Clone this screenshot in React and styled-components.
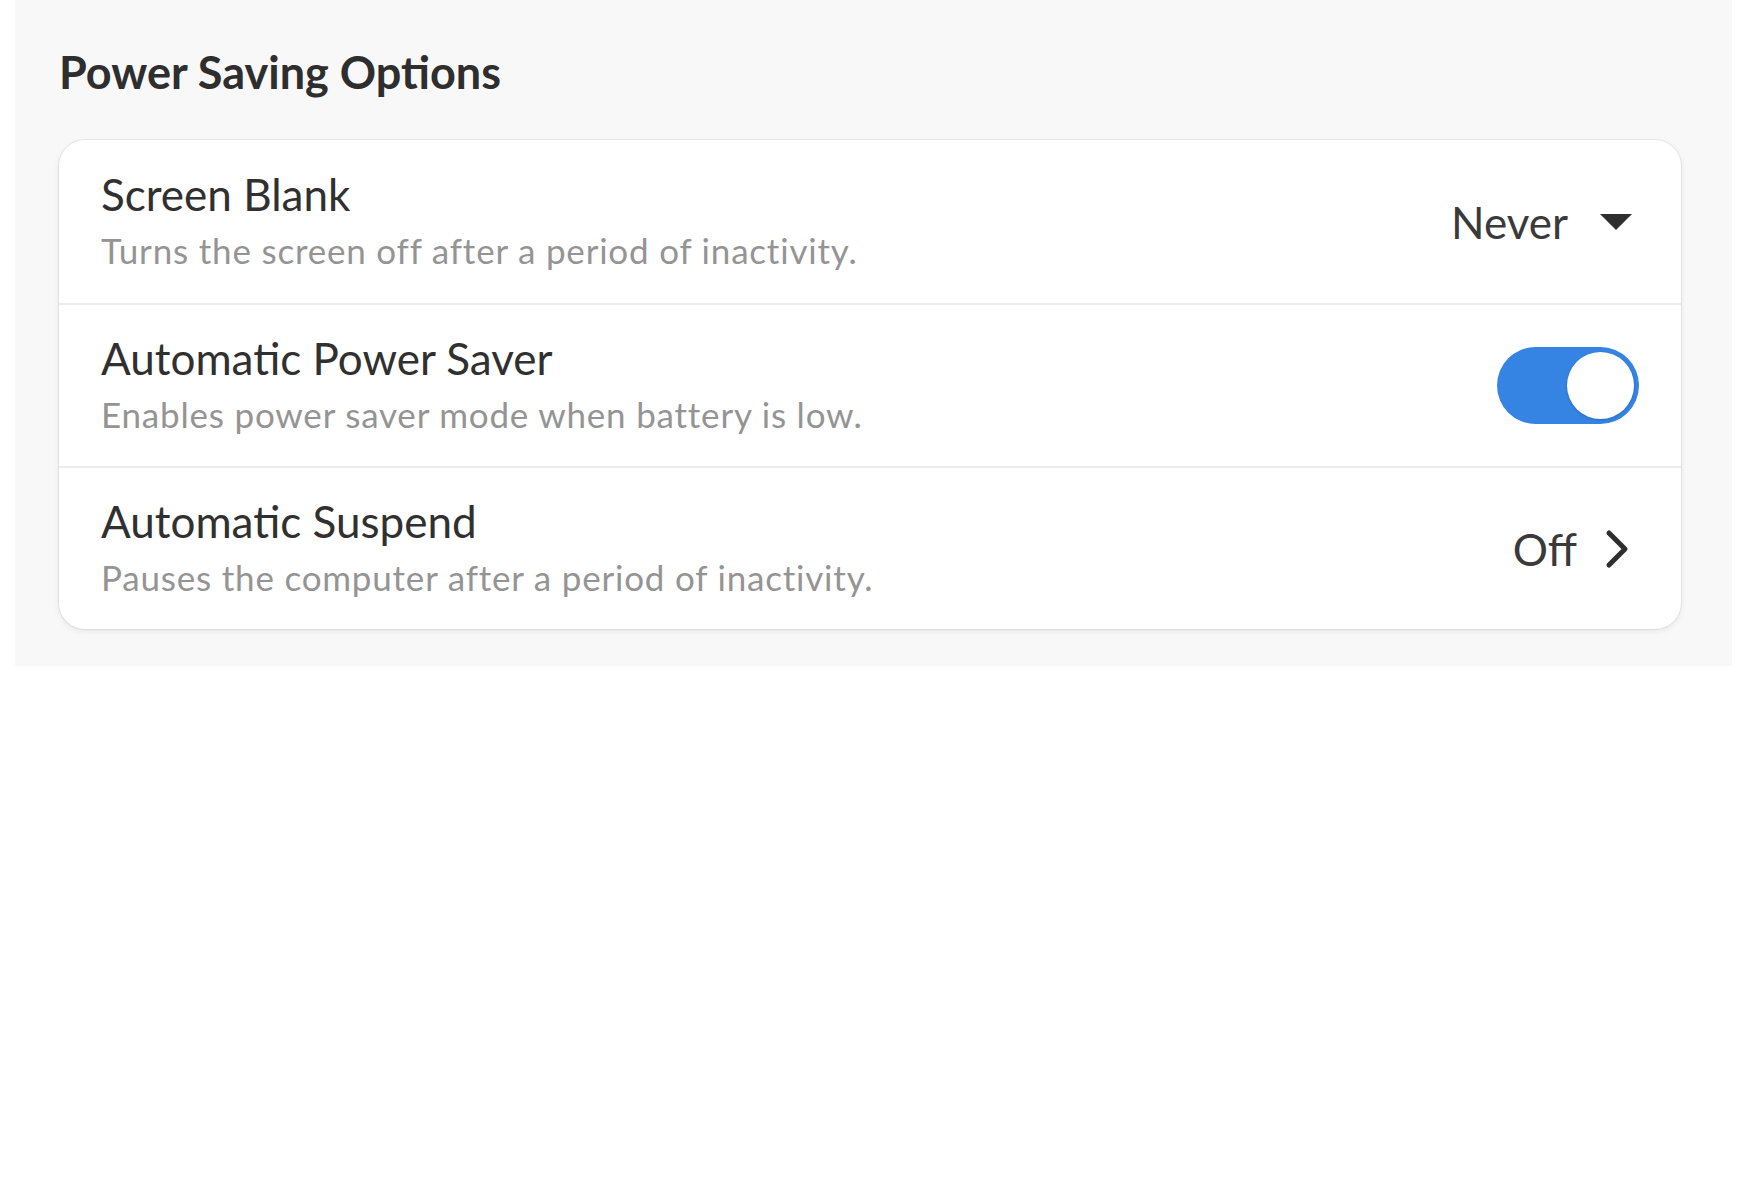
import React, { useState } from 'react';
import styled, { createGlobalStyle } from 'styled-components';

const GlobalStyle = createGlobalStyle`
  html, body {
    margin: 0;
    padding: 0;
    background: #ffffff;
  }
  body {
    font-family: 'Lato', 'Open Sans', sans-serif;
  }
`;

const Panel = styled.div`
  margin-left: 15px;
  width: 1717px;
  height: 666px;
  box-sizing: border-box;
  background: #f8f8f8;
  padding: 40px 51px 0 44px;
`;

const SectionTitle = styled.h2`
  margin: 0 0 36px 0;
  font-size: 45px;
  line-height: 64px;
  font-weight: 700;
  color: #2e2e2e;
`;

const Card = styled.div`
  background: #ffffff;
  border-radius: 26px;
  box-shadow: 0 0 0 1px rgba(0, 0, 0, 0.06), 0 2px 6px rgba(0, 0, 0, 0.08);
  overflow: hidden;
`;

const Row = styled.div`
  display: flex;
  align-items: center;
  justify-content: space-between;
  box-sizing: border-box;
  height: 163px;
  padding: 0 42px;
  border-top: ${p => (p.first ? 'none' : '2px solid #ececec')};
`;

const Text = styled.div`
  display: flex;
  flex-direction: column;
  gap: 10px;
  margin-top: -3px;
`;

const RowTitle = styled.div`
  font-size: 44px;
  line-height: 50px;
  color: #303030;
`;

const RowSubtitle = styled.div`
  font-size: 35px;
  line-height: 42px;
  color: #949494;
  letter-spacing: 0.8px;
`;

const Value = styled.div`
  display: flex;
  align-items: center;
  gap: ${p => p.gap || 30}px;
  font-size: 44px;
  color: #3a3a3a;
  margin-right: ${p => p.inset || 0}px;
`;

const Switch = styled.button`
  width: 142px;
  height: 77px;
  border: none;
  padding: 5px;
  border-radius: 40px;
  background: ${p => (p.on ? '#3584e4' : '#d6d6d6')};
  display: flex;
  justify-content: ${p => (p.on ? 'flex-end' : 'flex-start')};
  cursor: pointer;
`;

const Knob = styled.span`
  width: 67px;
  height: 67px;
  border-radius: 50%;
  background: #ffffff;
  box-shadow: 0 1px 3px rgba(0, 0, 0, 0.2);
`;

const CaretDown = () => (
  <svg width="36" height="20" viewBox="0 0 36 20">
    <path d="M2 2 L34 2 L18 18 Z" fill="#2e2e2e" />
  </svg>
);

const ChevronRight = () => (
  <svg width="28" height="40" viewBox="0 0 28 40">
    <path d="M6 4 L22 20 L6 36" fill="none" stroke="#2e2e2e" strokeWidth="5" strokeLinecap="round" strokeLinejoin="round" />
  </svg>
);

export default function App() {
  const [saver, setSaver] = useState(true);

  return (
    <>
      <GlobalStyle />
      <Panel>
        <SectionTitle>Power Saving Options</SectionTitle>
        <Card>
          <Row first>
            <Text>
              <RowTitle>Screen Blank</RowTitle>
              <RowSubtitle>Turns the screen off after a period of inactivity.</RowSubtitle>
            </Text>
            <Value gap={30} inset={5}>
              Never
              <CaretDown />
            </Value>
          </Row>
          <Row>
            <Text>
              <RowTitle>Automatic Power Saver</RowTitle>
              <RowSubtitle>Enables power saver mode when battery is low.</RowSubtitle>
            </Text>
            <Switch on={saver} onClick={() => setSaver(!saver)}>
              <Knob />
            </Switch>
          </Row>
          <Row>
            <Text>
              <RowTitle>Automatic Suspend</RowTitle>
              <RowSubtitle>Pauses the computer after a period of inactivity.</RowSubtitle>
            </Text>
            <Value gap={26} inset={8}>
              Off
              <ChevronRight />
            </Value>
          </Row>
        </Card>
      </Panel>
    </>
  );
}
